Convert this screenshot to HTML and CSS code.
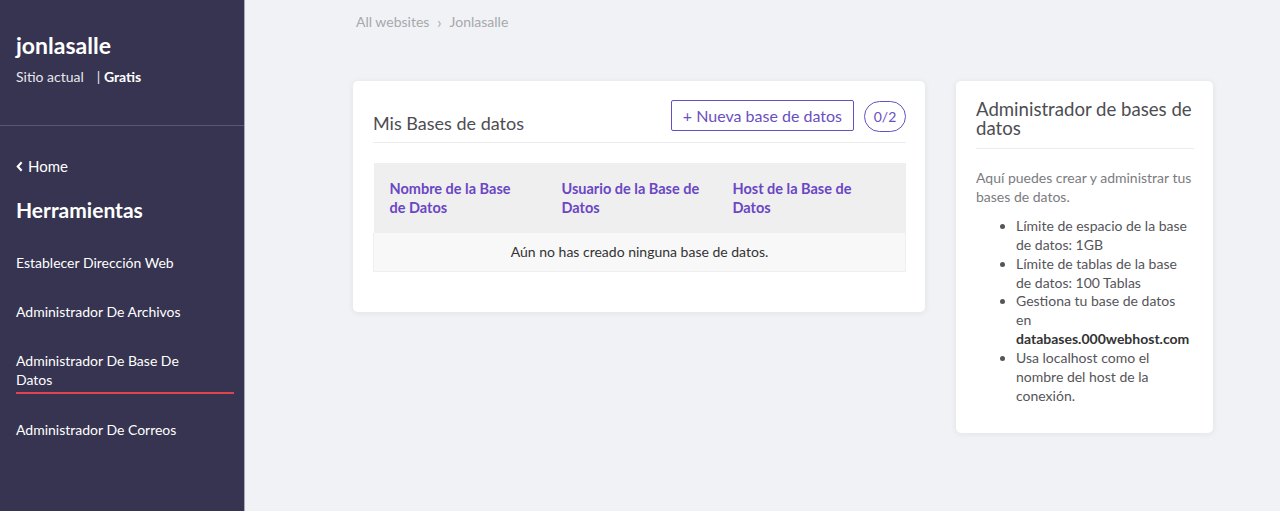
FILE: index.html
```html
<!DOCTYPE html>
<html lang="es">
<head>
<meta charset="utf-8">
<title>Bases de datos</title>
<link rel="stylesheet" href="styles.css">
</head>
<body>
<aside class="sidebar">
  <div class="brand">
    <div class="site-name">jonlasalle</div>
    <div class="site-meta"><span class="current">Sitio actual</span><span class="plan">| <b>Gratis</b></span></div>
  </div>
  <nav class="nav">
    <a class="home" href="#"><svg class="chev" viewBox="0 0 8 12" width="7" height="11"><path d="M6.5 1.2 L2 6 L6.5 10.8" fill="none" stroke="#fff" stroke-width="2.4" stroke-linejoin="miter"/></svg>Home</a>
    <div class="nav-title">Herramientas</div>
    <a class="nav-item" href="#">Establecer Dirección Web</a>
    <a class="nav-item" href="#">Administrador De Archivos</a>
    <a class="nav-item active" href="#">Administrador De Base De Datos</a>
    <a class="nav-item" href="#">Administrador De Correos</a>
  </nav>
</aside>
<main class="main">
  <div class="crumbs"><span>All websites</span><span class="sep">›</span><span>Jonlasalle</span></div>
  <div class="cards">
    <section class="card db-card">
      <div class="card-head">
        <h2 class="card-title">Mis Bases de datos</h2>
        <div class="actions">
          <button class="btn-new">+ Nueva base de datos</button>
          <span class="count">0/2</span>
        </div>
      </div>
      <table class="db-table">
        <colgroup><col class="c1"><col class="c2"><col></colgroup>
        <thead>
          <tr><th class="h1">Nombre de la Base de Datos</th><th class="h2">Usuario de la Base de Datos</th><th class="h3">Host de la Base de Datos</th></tr>
        </thead>
        <tbody>
          <tr><td colspan="3" class="empty">Aún no has creado ninguna base de datos.</td></tr>
        </tbody>
      </table>
    </section>
    <section class="card info-card">
      <h2 class="info-title">Administrador de bases de datos</h2>
      <p class="info-text">Aquí puedes crear y administrar tus bases de datos.</p>
      <ul class="info-list">
        <li>Límite de espacio de la base de datos: 1GB</li>
        <li>Límite de tablas de la base de datos: 100 Tablas</li>
        <li>Gestiona tu base de datos en <b>databases.000webhost.com</b></li>
        <li>Usa localhost como el nombre del host de la conexión.</li>
      </ul>
    </section>
  </div>
</main>
</body>
</html>
```
FILE: styles.css
```css
* { box-sizing: border-box; }
html, body { margin: 0; height: 100%; }
body {
  display: flex;
  font-family: Lato, "Liberation Sans", sans-serif;
  background: #f0f2f5;
  color: #333;
  overflow: hidden;
}
.sidebar {
  width: 245px;
  flex: none;
  background: #363450;
  border-right: 1px solid #a9a8bb;
  color: #fff;
}
.brand {
  padding: 31px 16px 0;
  height: 126px;
  border-bottom: 1px solid #5a5873;
}
.site-name {
  font-size: 23px;
  font-weight: 700;
  line-height: 28px;
}
.site-meta {
  margin-top: 9px;
  font-size: 14px;
  line-height: 18px;
  color: #e8e8ee;
}
.site-meta .current { margin-right: 13px; }
.site-meta b { color: #fff; }
.nav { padding: 0 10px 0 16px; }
.home {
  display: flex;
  align-items: center;
  gap: 5px;
  margin-top: 31px;
  font-size: 15px;
  line-height: 18px;
  color: #fff;
  text-decoration: none;
}
.nav-title {
  margin-top: 22px;
  font-size: 21px;
  font-weight: 700;
  line-height: 26px;
}
.nav-item {
  display: block;
  margin-top: 30px;
  font-size: 14px;
  line-height: 19px;
  color: #fff;
  text-decoration: none;
}
.nav-item.active {
  padding-bottom: 3px;
  border-bottom: 2px solid #e0454f;
  padding-right: 40px;
}
.nav-item.active + .nav-item { margin-top: 26px; }
.main {
  flex: 1;
  padding: 13px 0 0 108px;
}
.crumbs {
  padding-left: 3px;
  font-size: 14px;
  line-height: 18px;
  color: #a8a8ad;
  display: flex;
  gap: 8px;
}
.crumbs .sep { font-size: 15px; }
.cards {
  display: flex;
  align-items: flex-start;
  gap: 31px;
  margin-top: 50px;
}
.card {
  background: #fff;
  border-radius: 5px;
  box-shadow: 0 1px 6px rgba(40, 50, 80, 0.08);
}
.db-card {
  width: 572px;
  padding: 19px 19px 40px 20px;
}
.card-head {
  display: flex;
  justify-content: space-between;
  align-items: flex-start;
  height: 43px;
  border-bottom: 1px solid #ececef;
}
.card-title {
  margin: 11px 0 0;
  font-size: 18px;
  font-weight: 400;
  color: #4d4d52;
  line-height: 24px;
}
.actions { display: flex; align-items: flex-start; gap: 10px; }
.btn-new {
  height: 31px;
  padding: 0 11px;
  font-family: inherit;
  font-size: 16px;
  color: #6a4fc0;
  background: #fff;
  border: 1px solid #6a4fc0;
  border-radius: 2px;
}
.count {
  display: inline-flex;
  align-items: center;
  justify-content: center;
  width: 42px;
  height: 31px;
  border: 1px solid #6a4fc0;
  border-radius: 16px;
  font-size: 14px;
  color: #6a4fc0;
  margin-top: 1px;
}
.db-table {
  width: 100%;
  margin-top: 20px;
  border-collapse: collapse;
  table-layout: fixed;
}
.db-table col.c1 { width: 172px; }
.db-table col.c2 { width: 171px; }
.db-table th {
  background: #efefef;
  text-align: left;
  vertical-align: top;
  padding: 16px;
  font-size: 14.5px;
  font-weight: 700;
  line-height: 19px;
  color: #6a46c4;
}
.db-table th.h1 { padding-right: 20px; }
.db-table th.h2 { padding-right: 14px; }
.db-table th.h3 { padding-right: 26px; }
.db-table td.empty {
  background: #f8f8f8;
  border: 1px solid #efefef;
  border-top: none;
  text-align: center;
  padding: 10px 0;
  font-size: 14px;
  line-height: 18px;
  color: #333;
}
.info-card {
  width: 257px;
  padding: 19px 19px 28px 20px;
}
.info-title {
  margin: 0;
  padding-bottom: 10px;
  border-bottom: 1px solid #ececef;
  font-size: 18.6px;
  font-weight: 400;
  line-height: 19px;
  color: #4d4d52;
}
.info-text {
  margin: 19px 0 11px;
  font-size: 14px;
  line-height: 19px;
  color: #7b7b80;
}
.info-list {
  margin: 0;
  padding-left: 40px;
  font-size: 14px;
  line-height: 18.85px;
  color: #55555a;
}
.info-list b { color: #333; }
```
